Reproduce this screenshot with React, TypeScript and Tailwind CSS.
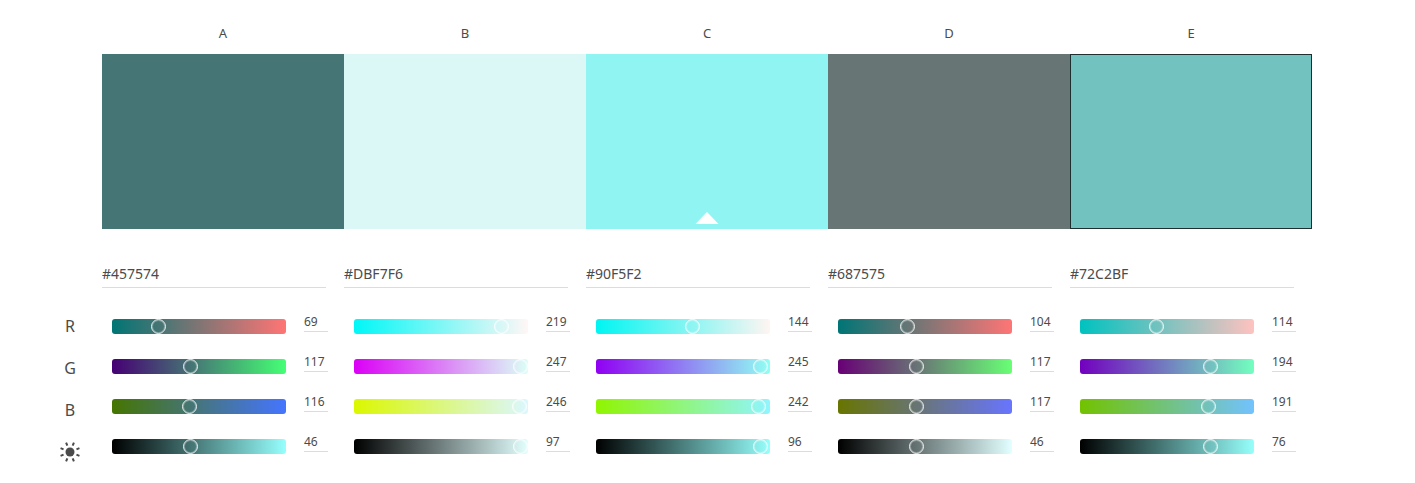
import { useState } from "react";

type Rgb = [number, number, number];

interface Swatch {
  name: string;
  rgb: Rgb;
  brightness: number;
}

const initialSwatches: Swatch[] = [
  { name: "A", rgb: [69, 117, 116], brightness: 46 },
  { name: "B", rgb: [219, 247, 246], brightness: 97 },
  { name: "C", rgb: [144, 245, 242], brightness: 96 },
  { name: "D", rgb: [104, 117, 117], brightness: 46 },
  { name: "E", rgb: [114, 194, 191], brightness: 76 },
];

const baseIndex = 2;
const channels = ["R", "G", "B"];

const css = (c: number[]) => `rgb(${c.map(Math.round).join(",")})`;
const toHex = (c: Rgb) =>
  "#" + c.map((v) => v.toString(16).padStart(2, "0")).join("").toUpperCase();

function channelTrack(rgb: Rgb, channel: number) {
  const from = [...rgb];
  const to = [...rgb];
  from[channel] = 0;
  to[channel] = 255;
  return `linear-gradient(to right, ${css(from)}, ${css(to)})`;
}

function brightnessTrack(rgb: Rgb) {
  const max = Math.max(...rgb, 1);
  return `linear-gradient(to right, #000, ${css(rgb.map((v) => (v * 255) / max))})`;
}

function SunIcon() {
  return (
    <svg viewBox="-10 -10 20 20" className="size-5 overflow-visible" role="img" aria-label="Brightness">
      <circle r="4.5" fill="#4b4b4b" />
      {[22.5, 67.5, 112.5, 157.5, 202.5, 247.5, 292.5, 337.5].map((angle) => (
        <line
          key={angle}
          x1="7"
          x2="10.2"
          stroke="#4b4b4b"
          strokeWidth="2"
          transform={`rotate(${angle})`}
        />
      ))}
    </svg>
  );
}

interface SliderProps {
  label: string;
  value: number;
  max: number;
  track: string;
  onChange: (value: number) => void;
}

function Slider({ label, value, max, track, onChange }: SliderProps) {
  return (
    <div className="flex h-10 items-start gap-[18px] pr-4 pl-[10px]">
      <div className="mt-[5px] h-[15px] min-w-0 flex-1 rounded-[3px]" style={{ background: track }}>
        <input
          type="range"
          aria-label={label}
          min={0}
          max={max}
          value={value}
          onChange={(e) => onChange(Number(e.target.value))}
          className="-ml-2 block h-[15px] w-[calc(100%+13px)] cursor-pointer appearance-none bg-transparent [&::-webkit-slider-thumb]:size-[15px] [&::-webkit-slider-thumb]:appearance-none [&::-webkit-slider-thumb]:rounded-full [&::-webkit-slider-thumb]:border [&::-webkit-slider-thumb]:border-white/90 [&::-webkit-slider-thumb]:bg-transparent [&::-webkit-slider-thumb]:shadow-[inset_0_0_0_1px_rgba(255,255,255,0.3)]"
        />
      </div>
      <input
        type="text"
        aria-label={`${label} value`}
        value={value}
        onChange={(e) => onChange(Math.min(max, Number(e.target.value) || 0))}
        className="h-[18px] w-6 border-b border-[#dcdcdc] pb-[2px] text-xs leading-[14px] text-[#4b4b4b] outline-none"
      />
    </div>
  );
}

export default function App() {
  const [swatches, setSwatches] = useState(initialSwatches);
  const [selected, setSelected] = useState(4);

  const setRgb = (index: number, rgb: Rgb) =>
    setSwatches((all) =>
      all.map((s, i) =>
        i === index ? { ...s, rgb, brightness: Math.round((Math.max(...rgb) / 255) * 100) } : s,
      ),
    );

  const setBrightness = (index: number, brightness: number) =>
    setSwatches((all) =>
      all.map((s, i) => {
        if (i !== index) return s;
        const max = Math.max(...s.rgb, 1);
        const rgb = s.rgb.map((v) => Math.round((v / max) * brightness * 2.55)) as Rgb;
        return { ...s, rgb, brightness };
      }),
    );

  return (
    <main className="flex bg-white pt-6 pr-[103px] pb-5 pl-[60px] font-['Noto_Sans',sans-serif] text-[#4b4b4b]">
      <div className="w-[42px] shrink-0 pt-[281px] text-base">
        {channels.map((c) => (
          <div key={c} className="flex h-[42px] w-5 items-center justify-center">
            {c}
          </div>
        ))}
        <div className="flex h-[42px] w-5 items-center justify-center">
          <SunIcon />
        </div>
      </div>
      <div className="grid min-w-0 flex-1 grid-cols-5">
        {swatches.map((s, index) => (
          <section key={s.name} className="min-w-0">
            <h2 className="h-[30px] text-center text-[13px] leading-[18px]">{s.name}</h2>
            <button
              type="button"
              aria-label={`Select color ${s.name}`}
              aria-pressed={selected === index}
              onClick={() => setSelected(index)}
              className={`flex h-[175px] w-full items-end justify-center border pb-1 ${
                selected === index ? "border-[#1e2f2f]" : "border-transparent"
              }`}
              style={{ backgroundColor: css(s.rgb) }}
            >
              {index === baseIndex && (
                <svg viewBox="0 0 24 12" className="h-3 w-6" aria-hidden="true">
                  <path d="M12 0 23.5 12H.5z" fill="#fff" />
                </svg>
              )}
            </button>
            <div className="pt-[34px] pr-[18px] pb-[26px]">
              <input
                type="text"
                aria-label={`Hex value of color ${s.name}`}
                value={toHex(s.rgb)}
                onChange={(e) => {
                  const m = /^#?([0-9a-f]{6})$/i.exec(e.target.value);
                  if (m) {
                    const n = parseInt(m[1], 16);
                    setRgb(index, [n >> 16, (n >> 8) & 255, n & 255]);
                  }
                }}
                className="block h-[25px] w-full border-b border-[#dcdcdc] pb-1 text-sm leading-5 outline-none"
              />
            </div>
            {channels.map((c, channel) => (
              <Slider
                key={c}
                label={`${s.name} ${c}`}
                value={s.rgb[channel]}
                max={255}
                track={channelTrack(s.rgb, channel)}
                onChange={(v) => {
                  const rgb: Rgb = [...s.rgb];
                  rgb[channel] = v;
                  setRgb(index, rgb);
                }}
              />
            ))}
            <Slider
              label={`${s.name} brightness`}
              value={s.brightness}
              max={100}
              track={brightnessTrack(s.rgb)}
              onChange={(v) => setBrightness(index, v)}
            />
          </section>
        ))}
      </div>
    </main>
  );
}
